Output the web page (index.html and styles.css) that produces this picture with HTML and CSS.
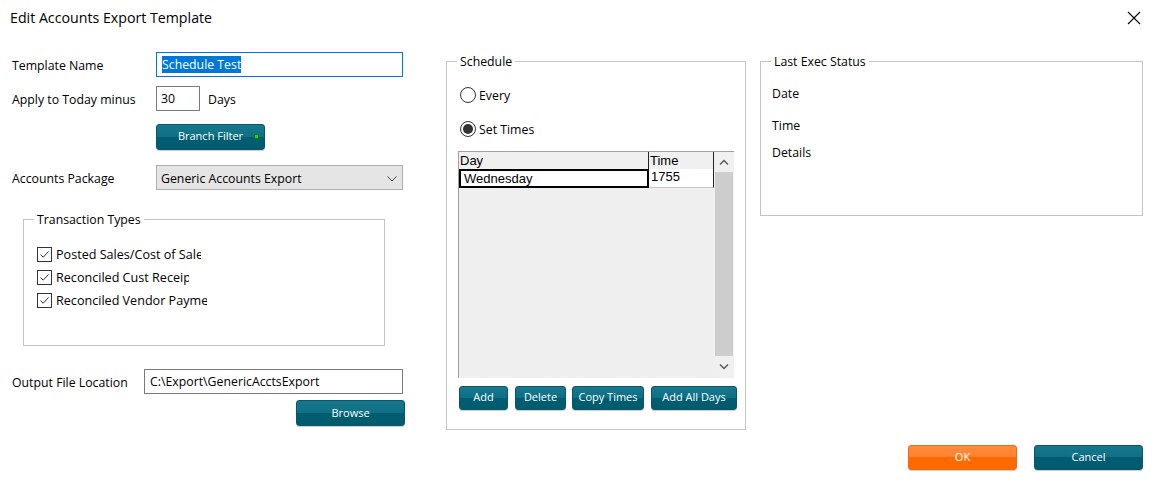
FILE: index.html
```html
<!DOCTYPE html>
<html lang="en">
<head>
<meta charset="utf-8">
<title>Edit Accounts Export Template</title>
<link rel="stylesheet" href="styles.css">
</head>
<body>
<div class="dialog">
  <header class="titlebar">
    <h1 class="title">Edit Accounts Export Template</h1>
    <span class="close" aria-label="Close">
      <svg width="14" height="14" viewBox="0 0 14 14"><path d="M1 1 L13 13 M13 1 L1 13" stroke="#000" stroke-width="1.1" fill="none"/></svg>
    </span>
  </header>

  <main class="content">
    <section class="col-left">
      <div class="row row-name">
        <label class="lbl">Template Name</label>
        <div class="input input-focus input-wide"><span class="sel">Schedule Test</span></div>
      </div>
      <div class="row row-days">
        <label class="lbl">Apply to Today minus</label>
        <div class="input input-num">30</div>
        <span class="days">Days</span>
      </div>
      <div class="row row-branch">
        <button class="btn btn-branch">Branch Filter<span class="led"></span></button>
      </div>
      <div class="row row-pkg">
        <label class="lbl">Accounts Package</label>
        <div class="select">
          <span>Generic Accounts Export</span>
          <svg class="chev" width="10" height="6" viewBox="0 0 10 6"><path d="M0.5 0.5 L5 5 L9.5 0.5" stroke="#444" stroke-width="1" fill="none"/></svg>
        </div>
      </div>

      <fieldset class="group group-tx">
        <legend>Transaction Types</legend>
        <div class="checks">
          <div class="check"><span class="cbox"><svg width="13" height="13" viewBox="0 0 13 13"><path d="M2.5 6.5 L5.2 9.2 L10.5 3.5" stroke="#333" stroke-width="1" fill="none"/></svg></span><span class="ctext w1">Posted Sales/Cost of Sales</span></div>
          <div class="check"><span class="cbox"><svg width="13" height="13" viewBox="0 0 13 13"><path d="M2.5 6.5 L5.2 9.2 L10.5 3.5" stroke="#333" stroke-width="1" fill="none"/></svg></span><span class="ctext w2">Reconciled Cust Receipts</span></div>
          <div class="check"><span class="cbox"><svg width="13" height="13" viewBox="0 0 13 13"><path d="M2.5 6.5 L5.2 9.2 L10.5 3.5" stroke="#333" stroke-width="1" fill="none"/></svg></span><span class="ctext w3">Reconciled Vendor Payments</span></div>
        </div>
      </fieldset>

      <div class="row row-out">
        <label class="lbl lbl-out">Output File Location</label>
        <div class="input input-out">C:\Export\GenericAcctsExport</div>
      </div>
      <div class="row row-browse">
        <button class="btn btn-browse">Browse</button>
      </div>
    </section>

    <fieldset class="group group-sched">
      <legend>Schedule</legend>
      <div class="sched-body">
        <div class="radio"><span class="rcircle"></span><span>Every</span></div>
        <div class="radio radio-2"><span class="rcircle on"></span><span>Set Times</span></div>
        <div class="grid">
          <div class="grid-main">
            <div class="grow ghead">
              <div class="gcell gday">Day</div>
              <div class="gcell gtime">Time</div>
            </div>
            <div class="grow gdata">
              <div class="gcell gday focus">Wednesday</div>
              <div class="gcell gtime">1755</div>
            </div>
          </div>
          <div class="vscroll">
            <span class="arrow"><svg width="10" height="6" viewBox="0 0 10 6"><path d="M1 5.5 L5 1.5 L9 5.5" stroke="#555" stroke-width="1.4" fill="none"/></svg></span>
            <span class="thumb"></span>
            <span class="arrow"><svg width="10" height="6" viewBox="0 0 10 6"><path d="M1 0.5 L5 4.5 L9 0.5" stroke="#555" stroke-width="1.4" fill="none"/></svg></span>
          </div>
        </div>
        <div class="sched-btns">
          <button class="btn b-add">Add</button>
          <button class="btn b-del">Delete</button>
          <button class="btn b-copy">Copy Times</button>
          <button class="btn b-all">Add All Days</button>
        </div>
      </div>
    </fieldset>

    <fieldset class="group group-status">
      <legend>Last Exec Status</legend>
      <div class="status-body">
        <div class="st st-date">Date</div>
        <div class="st st-time">Time</div>
        <div class="st st-det">Details</div>
      </div>
    </fieldset>
  </main>

  <footer class="actions">
    <button class="btn btn-ok">OK</button>
    <button class="btn btn-cancel">Cancel</button>
  </footer>
</div>
</body>
</html>
```

FILE: styles.css
```css
* { box-sizing: border-box; }
html, body { margin: 0; padding: 0; background: #fff; }
body {
  font-family: "Open Sans", "Noto Sans", sans-serif;
  font-size: 12.3px;
  color: #000;
  width: 1155px;
  height: 486px;
  overflow: hidden;
}
.dialog { width: 1155px; height: 486px; display: flex; flex-direction: column; }

.titlebar {
  height: 36px;
  display: flex;
  align-items: center;
  justify-content: space-between;
  padding: 0 14px 0 10px;
}
.title { margin: 0; font-size: 14.2px; font-weight: 400; line-height: 20px; }
.close { display: flex; width: 14px; height: 14px; }

.content {
  display: flex;
  align-items: flex-start;
  padding: 16px 0 0 12px;
  height: 409px;
}

/* left column */
.col-left { width: 393px; display: flex; flex-direction: column; }
.row { display: flex; align-items: center; }
.lbl { width: 144px; flex: none; line-height: 16px; padding-top: 2px; }
.lbl-out { width: 132px; }
.input {
  height: 25px;
  border: 1px solid #7a7a7a;
  background: #fff;
  display: flex;
  align-items: center;
  padding: 1px 0 0 5px;
  line-height: 16px;
}
.input-focus { border-color: #0078d7; padding-top: 0; }
.input-wide { width: 247px; }
.sel { background: #0078d7; color: #fff; line-height: 16px; padding-top: 1px; }
.input-num { width: 44px; padding-left: 4px; }
.days { margin-left: 8px; padding-top: 2px; }
.row-days { margin-top: 9px; }
.row-branch { margin-top: 13px; padding-left: 144px; }
.row-pkg { margin-top: 15px; }
.select {
  width: 247px;
  height: 25px;
  background: #e5e5e5;
  border: 1px solid #adadad;
  display: flex;
  align-items: center;
  justify-content: space-between;
  padding: 2px 5px 0 4px;
}
.row-out { margin-top: 23px; }
.input-out { width: 259px; padding-left: 5px; }
.row-browse { margin-top: 6px; justify-content: flex-end; }

/* buttons */
.btn {
  font-family: "Open Sans", "Noto Sans", sans-serif;
  font-size: 11px;
  color: #fff;
  border: 1px solid #0a5566;
  border-radius: 3px;
  background: linear-gradient(#17788d 0%, #0f6f85 50%, #005d71 50%, #005b6e 100%);
  box-shadow: 0 1px 1px rgba(0,0,0,.2);
  padding: 0 0 1px 0;
  cursor: default;
}
.btn-branch {
  position: relative;
  width: 109px;
  height: 26px;
  display: flex;
  align-items: center;
  justify-content: center;
  padding-bottom: 3px;
}
.led {
  position: absolute;
  right: 5px;
  top: 9px;
  width: 5px; height: 5px;
  background: #1fd21f;
  border: 1px solid #0b7a1a;
}
.btn-browse { width: 109px; height: 26px; padding-bottom: 2px; }

/* group boxes */
.group {
  margin: 0;
  padding: 0;
  border: 1px solid #c4c4c4;
  min-width: 0;
}
.group legend {
  padding: 2px 3px 0 3px;
  margin-left: 10px;
  line-height: 16px;
}
.group-tx {
  margin-top: 20px;
  margin-left: 11px;
  width: 362px;
  height: 136px;
}
.checks { padding: 15px 0 0 13px; display: flex; flex-direction: column; }
.check { height: 23px; display: flex; align-items: center; }
.cbox {
  width: 15px; height: 15px;
  border: 1px solid #333;
  display: flex; align-items: center; justify-content: center;
  background: #fff;
  flex: none;
}
.ctext { margin-left: 4px; white-space: nowrap; overflow: hidden; line-height: 16px; font-size: 12.6px; padding-top: 1px; }
.w1 { width: 145px; }
.w2 { width: 133px; }
.w3 { width: 151px; }

/* schedule */
.group-sched {
  margin-left: 41px;
  margin-top: 0;
  width: 300px;
  height: 378px;
}
.sched-body { padding: 16px 0 0 11px; }
.radio { display: flex; align-items: center; height: 18px; margin-left: 2px; }
.radio > span:last-child { padding-top: 1px; }
.radio-2 { margin-top: 16px; }
.rcircle {
  width: 16px; height: 16px;
  border: 1px solid #333;
  border-radius: 50%;
  margin-right: 3px;
  display: flex; align-items: center; justify-content: center;
  background: #fff;
}
.rcircle.on::after {
  content: "";
  width: 10px; height: 10px;
  border-radius: 50%;
  background: #333;
}
.grid {
  margin-top: 13px;
  width: 276px;
  height: 227px;
  display: flex;
  border-top: 1px solid #a0a0a0;
  border-left: 1px solid #a0a0a0;
  background: #efefef;
  font-family: "Liberation Sans", Arial, sans-serif;
  font-size: 13px;
}
.grid-main { width: 255px; display: flex; flex-direction: column; }
.grow { display: flex; height: 17px; }
.gcell { line-height: 17px; white-space: nowrap; }
.ghead .gcell { background: #f0f0f0; padding-left: 1px; }
.ghead .gday { width: 190px; border-right: 1px solid #222; }
.ghead .gtime { width: 65px; border-right: 1px solid #222; }
.gdata { height: 19px; }
.gdata .gday {
  width: 190px;
  background: #fff;
  border: 2px solid #000;
  padding-left: 3px;
  line-height: 15px;
}
.gdata .gtime {
  width: 65px;
  background: #fff;
  border-bottom: 1px solid #c8c8c8;
  border-right: 1px solid #222;
  padding-left: 2px;
  line-height: 16px;
}
.vscroll {
  width: 20px;
  display: flex;
  flex-direction: column;
  background: #f0f0f0;
}
.arrow { height: 20px; display: flex; align-items: center; justify-content: center; flex: none; }
.thumb { flex: 1; background: #cdcdcd; margin: 0 1px 0 1px; }
.vscroll .arrow:last-child { height: 22px; }
.sched-btns { display: flex; margin-top: 8px; margin-left: 1px; }
.sched-btns .btn { height: 24px; font-size: 11px; padding-bottom: 3px; }
.b-add { width: 49px; }
.b-del { width: 51px; margin-left: 7px; }
.b-copy { width: 72px; margin-left: 6px; }
.b-all { width: 86px; margin-left: 7px; }

/* status */
.group-status {
  margin-left: 14px;
  margin-top: 0;
  width: 383px;
  height: 164px;
}
.status-body { padding: 16px 0 0 11px; line-height: 16px; }
.st-time { margin-top: 16px; }
.st-det { margin-top: 11px; }

/* footer */
.actions {
  display: flex;
  justify-content: flex-end;
  gap: 17px;
  padding: 0 12px 0 0;
}
.btn-ok, .btn-cancel { width: 109px; height: 25px; font-size: 11px; padding-bottom: 2px; }
.btn-ok {
  background: linear-gradient(#ff8b3a 0%, #ff8330 50%, #ff6a00 50%, #ff6a00 100%);
  border-color: #ef6a10;
}
```
